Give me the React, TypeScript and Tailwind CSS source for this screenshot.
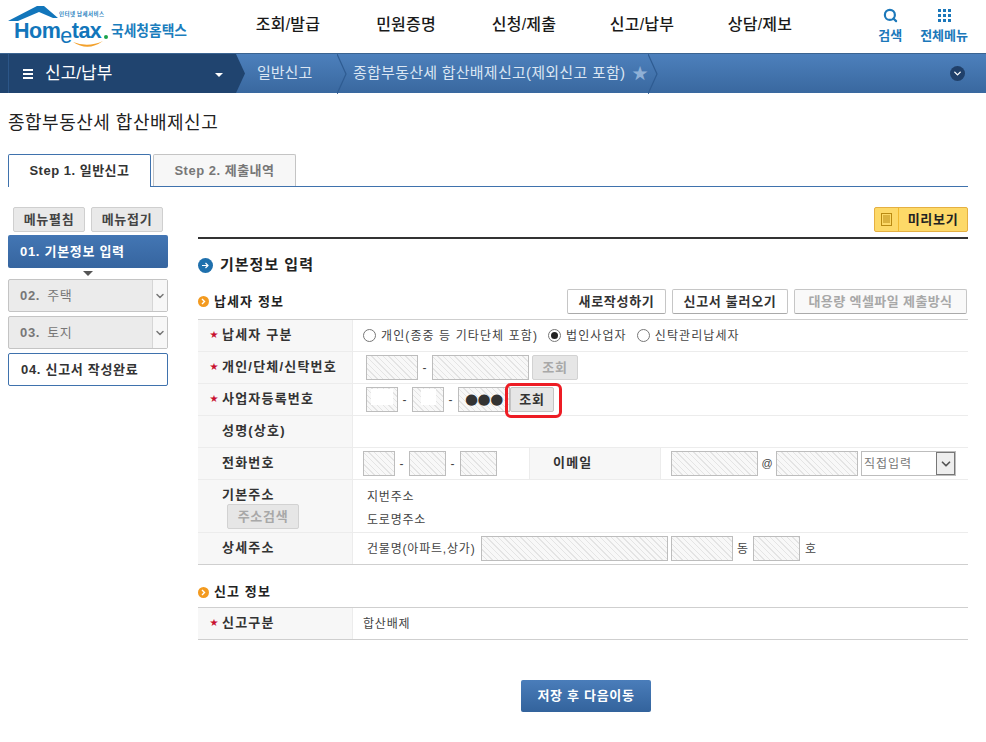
import { ChevronDown, Search } from "lucide-react";
import type { ReactNode } from "react";

const hatch =
  "bg-[repeating-linear-gradient(45deg,#f8f8f8_0px,#f8f8f8_3px,#e4e4e4_3px,#e4e4e4_4px)] border border-[#bdbdbd]";

function Field({ className, children }: { className: string; children?: ReactNode }) {
  return <div className={`${hatch} h-[25px] shrink-0 ${className}`}>{children}</div>;
}

function GreyButton({ children, className = "" }: { children: ReactNode; className?: string }) {
  return (
    <div
      className={`h-[25px] flex items-center justify-center rounded-[2px] border border-[#d2d2d2] bg-[#e6e6e6] text-[13px] font-bold tracking-[0.7px] text-[#a8a8a8] shrink-0 ${className}`}
    >
      {children}
    </div>
  );
}

function Row({
  label,
  required,
  children,
  className = "h-[32px]",
}: {
  label: ReactNode;
  required?: boolean;
  children?: ReactNode;
  className?: string;
}) {
  return (
    <div className={`flex border-b border-[#ececec] ${className}`}>
      <div className="w-[155px] shrink-0 bg-[#f7f7f7] border-r border-[#ececec] flex items-center pl-[11px] pb-[1px] text-[13px] font-bold tracking-[1.2px] text-[#333]">
        <span className="w-[12px] ml-px text-[#c8102e] text-[8px] leading-none">{required ? "★" : ""}</span>
        {label}
      </div>
      <div className="flex-1 flex items-center min-w-0 text-[12px] tracking-[0.8px] text-[#444]">{children}</div>
    </div>
  );
}

function Radio({ checked }: { checked?: boolean }) {
  return (
    <span className="w-[13px] h-[13px] rounded-full border border-[#777] bg-white flex items-center justify-center shrink-0">
      {checked && <span className="w-[7px] h-[7px] rounded-full bg-[#222]" />}
    </span>
  );
}

function SectionTitle({ children }: { children: ReactNode }) {
  return (
    <div className="flex items-center gap-[5px] text-[13px] font-bold tracking-[1.1px] text-[#222]">
      <span className="w-[11px] h-[11px] rounded-full bg-[#f39a1f] flex items-center justify-center">
        <svg width="7" height="7" viewBox="0 0 7 7">
          <path d="M2 1l2.5 2.500L2 6" fill="none" stroke="#fff" strokeWidth="1.4" />
        </svg>
      </span>
      {children}
    </div>
  );
}

function Step({ children, expandable }: { children: ReactNode; expandable?: boolean }) {
  return (
    <div className="h-[33px] flex rounded-[2px] border border-[#c4c4c4] bg-[#ebebeb] text-[13px] tracking-[0.7px] text-[#777]">
      <div className="flex-1 flex items-center pl-[11px]">{children}</div>
      {expandable && (
        <div className="w-[15px] bg-[#f7f7f7] border-l border-[#d6d6d6] flex items-center justify-center">
          <ChevronDown size={12} strokeWidth={3} className="text-[#777]" />
        </div>
      )}
    </div>
  );
}

function Logo() {
  return (
    <svg width="190" height="48" viewBox="0 0 190 48" className="shrink-0">
      <path d="M8 16 L37 1 H44 L58 13 L53 13 L39 7 L18 16 Z" fill="#1276bb" />
      <text x="59" y="11" fontSize="5.5" fontWeight="700" fill="#2a7fc0" fontFamily="Noto Sans CJK KR" textLength="45">
        인터넷 납세서비스
      </text>
      <text x="14" y="33" fontSize="21.5" fontWeight="700" fill="#1276bb" fontFamily="Liberation Sans" letterSpacing="-0.5">
        Hom
        <tspan dy="5" fontWeight="400">e</tspan>
        <tspan dy="-5">tax</tspan>
      </text>
      <circle cx="106" cy="32" r="2" fill="#1aa34a" />
      <path d="M73 37 Q88 47 103 36 Q88 43 73 37 Z" fill="#f3a12c" />
      <text x="111" y="31" fontSize="14.5" fontWeight="700" fill="#1a7dbd" fontFamily="Noto Sans CJK KR" textLength="76" lengthAdjust="spacingAndGlyphs">
        국세청홈택스
      </text>
    </svg>
  );
}

function Crumb() {
  return (
    <svg width="11" height="40" viewBox="0 0 11 40" className="shrink-0">
      <path d="M0 0 L9 20 L0 40" fill="none" stroke="#2f5c92" strokeWidth="1.2" />
    </svg>
  );
}

export default function App() {
  return (
    <div className="w-[986px] h-[742px] overflow-hidden bg-white font-['Liberation_Sans','Noto_Sans_CJK_KR',sans-serif]">
      {/* top header */}
      <div className="h-[53px] flex items-start">
        <div className="w-[229px] pt-[5px] shrink-0">
          <Logo />
        </div>
        <div className="flex h-full items-center text-[16px] font-medium tracking-[0.2px] text-[#1a1a1a] pb-[3px]">
          {["조회/발급", "민원증명", "신청/제출", "신고/납부", "상담/제보"].map((m) => (
            <div key={m} className="w-[118px] text-center">
              {m}
            </div>
          ))}
        </div>
        <div className="flex-1 flex justify-end text-[13px] font-bold text-[#1c78ba] pr-[18px] pt-[8px] gap-[18px]">
          <div className="flex flex-col items-center">
            <Search size={15} strokeWidth={3.5} />
            <span className="mt-[3px]">검색</span>
          </div>
          <div className="flex flex-col items-center">
            <div className="grid grid-cols-3 gap-[2px] w-[13px] h-[13px] my-[1px]">
              {Array.from({ length: 9 }).map((_, i) => (
                <span key={i} className="w-[3px] h-[3px] bg-[#1c78ba]" />
              ))}
            </div>
            <span className="mt-[3px]">전체메뉴</span>
          </div>
        </div>
      </div>

      {/* breadcrumb bar */}
      <div className="h-[40px] flex items-center bg-gradient-to-b from-[#4d80bc] to-[#39689f] border-t border-[#3b6491] text-white text-[15px]">
        <div className="w-[236px] h-full bg-[#20446f] flex items-center shrink-0 relative">
          <div className="w-[9px] h-full border-r border-[#2c5688]" />
          <div className="w-[14px] ml-[14px] flex flex-col gap-[2px]">
            <span className="w-[10px] h-[2px] bg-white" />
            <span className="w-[10px] h-[2px] bg-white" />
            <span className="w-[10px] h-[2px] bg-white" />
          </div>
          <span className="ml-[-2px] pl-[10px] text-[17px]">신고/납부</span>
          <span className="absolute left-[215px] top-[19px] w-0 h-0 border-x-[4px] border-x-transparent border-t-[4px] border-t-white" />
        </div>
        <svg width="10" height="39" viewBox="0 0 10 39" className="shrink-0">
          <path d="M0 0 L9 19.5 L0 39 Z" fill="#20446f" />
        </svg>
        <span className="ml-[11px] w-[80px] shrink-0 text-[#dbe6f3]">일반신고</span>
        <Crumb />
        <span className="ml-[5px] w-[279px] shrink-0 text-[#dbe6f3] whitespace-nowrap tracking-[0.25px]">
          종합부동산세 합산배제신고(제외신고 포함)
        </span>
        <span className="text-[#8fb0d6] text-[16px] w-[16px] shrink-0">★</span>
        <Crumb />
        <div className="flex-1 flex justify-end pr-[21px]">
          <span className="w-[15px] h-[15px] rounded-full bg-[#20406a] flex items-center justify-center">
            <ChevronDown size={11} strokeWidth={3} className="text-white" />
          </span>
        </div>
      </div>

      {/* title */}
      <div className="pl-[8px] pt-[19px] h-[61px] text-[18px] leading-[22px] tracking-[0.5px] text-[#222]">
        종합부동산세 합산배제신고
      </div>

      {/* tabs */}
      <div className="ml-[8px] w-[960px] h-[33px] flex items-end border-b border-[#3f72ad] text-[13px] font-bold tracking-[0.5px]">
        <div className="w-[143px] h-[33px] flex items-center justify-center rounded-t-[2px] border border-b-0 border-[#3f72ad] bg-white text-[#333] relative top-[1px]">
          Step 1. 일반신고
        </div>
        <div className="ml-[2px] w-[143px] h-[32px] flex items-center justify-center rounded-t-[2px] border border-b-0 border-[#c4c4c4] bg-[#f7f7f7] text-[#777]">
          Step 2. 제출내역
        </div>
      </div>

      <div className="flex pt-[20px] pl-[8px]">
        {/* sidebar */}
        <div className="w-[160px] shrink-0">
          <div className="flex justify-center gap-[6px] text-[13px] font-bold tracking-[0.7px] text-[#444]">
            {["메뉴펼침", "메뉴접기"].map((b) => (
              <div key={b} className="w-[72px] h-[25px] flex items-center justify-center rounded-[2px] border border-[#cfcfcf] bg-[#e9e9e9]">
                {b}
              </div>
            ))}
          </div>
          <div className="mt-[3px] h-[33px] flex items-center pl-[12px] rounded-[2px] bg-gradient-to-b from-[#4376b4] to-[#36659f] text-white text-[13px] font-bold tracking-[0.7px]">
            01. 기본정보 입력
          </div>
          <div className="h-[11px] flex justify-center pt-[3px]">
            <span className="w-0 h-0 border-x-[5px] border-x-transparent border-t-[5px] border-t-[#555]" />
          </div>
          <Step expandable>
            <b className="mr-[7px]">02.</b>주택
          </Step>
          <div className="h-[4px]" />
          <Step expandable>
            <b className="mr-[7px]">03.</b>토지
          </Step>
          <div className="mt-[4px] h-[33px] flex items-center pl-[12px] rounded-[2px] border border-[#3f72ad] bg-white text-[#333] text-[13px] font-bold tracking-[0.7px]">
            04. 신고서 작성완료
          </div>
        </div>

        {/* main */}
        <div className="ml-[30px] w-[770px] shrink-0">
          <div className="flex justify-end">
            <div className="w-[94px] h-[25px] flex rounded-[2px] border border-[#e5b042] bg-[#fdd968] text-[13px] font-bold tracking-[0.7px] text-[#222]">
              <div className="w-[24px] border-r border-[#f0b92f] flex items-center justify-center">
                <svg width="11" height="13" viewBox="0 0 11 13">
                  <rect x="0.5" y="0.5" width="10" height="12" fill="none" stroke="#b98a12" />
                  <path d="M2 3h7M2 5h7M2 7h7M2 9h7" stroke="#b98a12" />
                </svg>
              </div>
              <div className="flex-1 flex items-center justify-center">미리보기</div>
            </div>
          </div>
          <div className="mt-[5px] border-t-2 border-[#333] h-[20px]" />
          <div className="flex items-center gap-[7px] text-[15px] font-bold tracking-[1px] leading-[16px] text-[#222] h-[16px]">
            <span className="w-[15px] h-[15px] rounded-full bg-[#1f70ad] flex items-center justify-center">
              <svg width="9" height="9" viewBox="0 0 9 9">
                <path d="M1 4.500h6M4.500 2l2.500 2.500L4.500 7" fill="none" stroke="#fff" strokeWidth="1.2" />
              </svg>
            </span>
            기본정보 입력
          </div>

          <div className="mt-[16px] h-[25px] flex items-center justify-between">
            <SectionTitle>납세자 정보</SectionTitle>
            <div className="flex gap-[6px] text-[13px] font-bold tracking-[0.7px] text-[#333]">
              <div className="w-[99px] h-[25px] flex items-center justify-center rounded-[2px] border border-[#c6c6c6] border-b-[#aaa] bg-white">새로작성하기</div>
              <div className="w-[116px] h-[25px] flex items-center justify-center rounded-[2px] border border-[#c6c6c6] border-b-[#aaa] bg-white">신고서 불러오기</div>
              <div className="w-[173px] h-[25px] flex items-center justify-center rounded-[2px] border border-[#c6c6c6] border-b-[#aaa] bg-[#f9f9f9] text-[#a8a8a8] mr-[1px] tracking-[0.4px]">대용량 엑셀파일 제출방식</div>
            </div>
          </div>

          <div className="mt-[5px] border-t border-[#cfcfcf]">
            <Row label="납세자 구분" required>
              <div className="pl-[10px] flex items-center tracking-[1.1px]">
                <Radio />
                <span className="ml-[5px]">개인(종중 등 기타단체 포함)</span>
                <span className="ml-[10px]"><Radio checked /></span>
                <span className="ml-[5px]">법인사업자</span>
                <span className="ml-[10px]"><Radio /></span>
                <span className="ml-[5px]">신탁관리납세자</span>
              </div>
            </Row>
            <Row label="개인/단체/신탁번호" required>
              <div className="pl-[13px] flex items-center">
                <Field className="w-[52px]" />
                <span className="w-[14px] text-center">-</span>
                <Field className="w-[97px]" />
                <GreyButton className="ml-[3px] w-[46px]">조회</GreyButton>
              </div>
            </Row>
            <Row label="사업자등록번호" required>
              <div className="pl-[13px] flex items-center">
                <Field className="w-[32px] flex justify-center pt-[1px]">
                  <span className="w-[22px] h-[16px] bg-white" />
                </Field>
                <span className="w-[14px] text-center">-</span>
                <Field className="w-[32px] flex justify-center pt-[1px]">
                  <span className="w-[15px] h-[16px] bg-white" />
                </Field>
                <span className="w-[14px] text-center">-</span>
                <div className={`${hatch} h-[25px] w-[52px] flex items-center pl-[6px] font-['DejaVu_Sans'] text-[15px] leading-none text-[#333] tracking-[-0.5px] shrink-0`}>
                  ●●●
                </div>
                <div className="relative shrink-0">
                  <GreyButton className="w-[44px] !text-[#333] !border-[#c4c4c4]">조회</GreyButton>
                  <div className="absolute left-[-5px] top-[-4px] w-[57px] h-[35px] rounded-[6px] border-[3px] border-[#ed1c24]" />
                </div>
              </div>
            </Row>
            <Row label={<span>성명(상호)</span>} />
            <Row label="전화번호">
              <div className="pl-[10px] flex items-center w-[176px] shrink-0">
                <Field className="w-[32px]" />
                <span className="w-[14px] text-center">-</span>
                <Field className="w-[37px]" />
                <span className="w-[14px] text-center">-</span>
                <Field className="w-[37px]" />
              </div>
              <div className="w-[132px] h-full shrink-0 bg-[#f7f7f7] border-x border-[#ececec] flex items-center pl-[23px] pb-[1px] text-[13px] font-bold tracking-[1.2px] text-[#333]">
                이메일
              </div>
              <div className="pl-[10px] flex items-center">
                <Field className="w-[87px]" />
                <span className="w-[18px] text-center text-[11px] tracking-normal">@</span>
                <Field className="w-[82px]" />
                <div className="ml-[3px] w-[95px] h-[25px] border border-[#bdbdbd] flex items-center justify-between pl-[2px] text-[12px] tracking-[1px] text-[#777] shrink-0">
                  직접입력
                  <span className="w-[19px] h-full bg-[#eee] border border-[#777] flex items-center justify-center">
                    <ChevronDown size={14} strokeWidth={3} className="text-[#555]" />
                  </span>
                </div>
              </div>
            </Row>
            <Row
              className="h-[53px]"
              label={
                <div className="flex flex-col pt-[3px]">
                  <span>기본주소</span>
                  <GreyButton className="ml-[5px] w-[72px]">주소검색</GreyButton>
                </div>
              }
            >
              <div className="pl-[14px] flex flex-col gap-[8px] leading-[15px] pt-[5px]">
                <span>지번주소</span>
                <span>도로명주소</span>
              </div>
            </Row>
            <div className="border-b border-[#cfcfcf]">
              <Row label="상세주소" className="h-[31px] !border-b-0">
                <div className="pl-[14px] flex items-center">
                  <span className="w-[114px] shrink-0 whitespace-nowrap">건물명(아파트,상가)</span>
                  <Field className="w-[187px]" />
                  <Field className="ml-[3px] w-[62px]" />
                  <span className="w-[20px] text-center">동</span>
                  <Field className="w-[47px]" />
                  <span className="ml-[5px]">호</span>
                </div>
              </Row>
            </div>
          </div>

          <div className="mt-[18px] h-[18px] flex items-center">
            <SectionTitle>신고 정보</SectionTitle>
          </div>
          <div className="mt-[6px] border-t border-[#cfcfcf]">
            <div className="border-b border-[#cfcfcf]">
              <Row label="신고구분" required className="h-[31px] !border-b-0">
                <span className="pl-[10px]">합산배제</span>
              </Row>
            </div>
          </div>
          <div className="mt-[40px]">
            <div className="w-[130px] h-[32px] ml-[323px] flex items-center justify-center rounded-[2px] bg-gradient-to-b from-[#4a7dba] to-[#33639c] text-white text-[13px] font-bold tracking-[0.7px]">
              저장 후 다음이동
            </div>
          </div>
        </div>
      </div>
    </div>
  );
}
